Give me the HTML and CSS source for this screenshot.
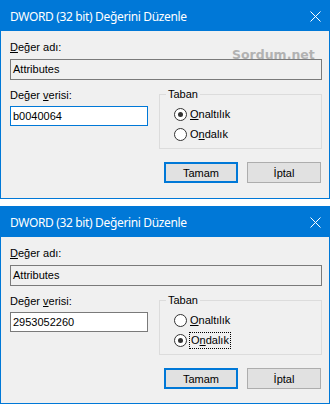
FILE: index.html
```html
<!DOCTYPE html>
<html lang="tr">
<head>
<meta charset="utf-8">
<title>DWORD</title>
<link rel="stylesheet" href="styles.css">
</head>
<body>
<div class="page">
  <div class="dialog d1">
    <div class="titlebar">
      <span class="title">DWORD (32 bit) Değerini Düzenle</span>
      <svg class="close" width="11" height="11" viewBox="0 0 11 11"><path d="M0.5 0.5L10.5 10.5M10.5 0.5L0.5 10.5" stroke="#fff" stroke-width="1" fill="none"/></svg>
    </div>
    <div class="content">
      <div class="watermark">Sordum.net</div>
      <div class="lbl first"><u>D</u>eğer adı:</div>
      <div class="field ro">Attributes</div>
      <div class="lower">
        <div class="left">
          <div class="lbl">Değer <u>v</u>erisi:</div>
          <div class="field edit focused">b0040064</div>
        </div>
        <fieldset class="group">
          <legend>Taban</legend>
          <div class="radio-row"><span class="radio checked"></span><span class="rlabel"><u>O</u>naltılık</span></div>
          <div class="radio-row"><span class="radio"></span><span class="rlabel">O<u>n</u>dalık</span></div>
        </fieldset>
      </div>
      <div class="buttons">
        <div class="btn default">Tamam</div>
        <div class="btn">İptal</div>
      </div>
    </div>
  </div>

  <div class="dialog d2">
    <div class="titlebar">
      <span class="title">DWORD (32 bit) Değerini Düzenle</span>
      <svg class="close" width="11" height="11" viewBox="0 0 11 11"><path d="M0.5 0.5L10.5 10.5M10.5 0.5L0.5 10.5" stroke="#fff" stroke-width="1" fill="none"/></svg>
    </div>
    <div class="content">
      <div class="lbl first"><u>D</u>eğer adı:</div>
      <div class="field ro">Attributes</div>
      <div class="lower">
        <div class="left">
          <div class="lbl">Değer <u>v</u>erisi:</div>
          <div class="field edit">2953052260</div>
        </div>
        <fieldset class="group">
          <legend>Taban</legend>
          <div class="radio-row"><span class="radio"></span><span class="rlabel"><u>O</u>naltılık</span></div>
          <div class="radio-row"><span class="radio checked"></span><span class="rlabel focus">O<u>n</u>dalık</span></div>
        </fieldset>
      </div>
      <div class="buttons">
        <div class="btn default">Tamam</div>
        <div class="btn">İptal</div>
      </div>
    </div>
  </div>
</div>
</body>
</html>
```
FILE: styles.css
```css
html, body {
  margin: 0;
  padding: 0;
  background: #ffffff;
}
.page {
  width: 331px;
  height: 405px;
  display: flex;
  flex-direction: column;
  gap: 7px;
}
.dialog {
  width: 330px;
  box-sizing: border-box;
  border: 1px solid #0078d7;
  background: #f0f0f0;
  font-family: "Liberation Sans", Arial, sans-serif;
  font-size: 11px;
  color: #000;
}
.d1 { height: 199px; }
.d2 { height: 198px; }
.titlebar {
  height: 30px;
  background: #0078d7;
  color: #fff;
  display: flex;
  align-items: center;
  justify-content: space-between;
  padding: 0 8px 0 9px;
}
.title {
  font-family: "Noto Sans", "Open Sans", sans-serif;
  font-size: 12px;
  letter-spacing: -0.35px;
  line-height: 16px;
  margin-top: 1px;
}
.close {
  display: block;
}
.content {
  position: relative;
  padding: 0 7px 0 9px;
}
.watermark {
  position: absolute;
  left: 231px;
  top: 5px;
  font-family: "DejaVu Sans", sans-serif;
  font-weight: bold;
  font-size: 12.5px;
  line-height: 17px;
  color: #b2b2b2;
}
.lbl {
  line-height: 13px;
  height: 13px;
}
.lbl.first { margin-top: 10px; }
.left .lbl { margin-top: 1px; }
u { text-decoration-thickness: 1px; text-underline-offset: 1px; }
.field {
  box-sizing: border-box;
  border: 1px solid #7a7a7a;
  padding-left: 2px;
}
.field.ro {
  margin-top: 5px;
  height: 21px;
  line-height: 19px;
  background: #f0f0f0;
}
.field.edit {
  margin-top: 4px;
  width: 138px;
  height: 20px;
  line-height: 18px;
  background: #fff;
}
.field.focused { border-color: #0078d7; }
.lower {
  display: flex;
  align-items: flex-start;
  gap: 11px;
  margin-top: 8px;
}
.left { width: 138px; }
.group {
  width: 163px;
  box-sizing: border-box;
  margin: 0;
  border: 1px solid #dcdcdc;
  padding: 3px 0 4px 6px;
  min-width: 0;
}
.group legend {
  padding: 0 2px;
  line-height: 13px;
}
.radio-row {
  display: flex;
  align-items: center;
  height: 20px;
  margin-left: 8px;
}
.radio {
  width: 13px;
  height: 13px;
  box-sizing: border-box;
  border: 1px solid #333;
  border-radius: 50%;
  background: #fff;
  display: flex;
  align-items: center;
  justify-content: center;
}
.radio.checked::after {
  content: "";
  width: 5px;
  height: 5px;
  border-radius: 50%;
  background: #333;
}
.rlabel {
  margin-left: 3px;
  line-height: 13px;
}
.rlabel.focus {
  outline: 1px dotted #000;
  outline-offset: 1px;
  margin-left: 4px;
}
.buttons {
  display: flex;
  justify-content: flex-end;
  gap: 9px;
  margin-top: 13px;
  margin-right: 1px;
}
.btn {
  width: 74px;
  height: 21px;
  box-sizing: border-box;
  border: 1px solid #adadad;
  background: #e1e1e1;
  display: flex;
  align-items: center;
  justify-content: center;
}
.btn.default {
  border: 2px solid #0078d7;
}
```
